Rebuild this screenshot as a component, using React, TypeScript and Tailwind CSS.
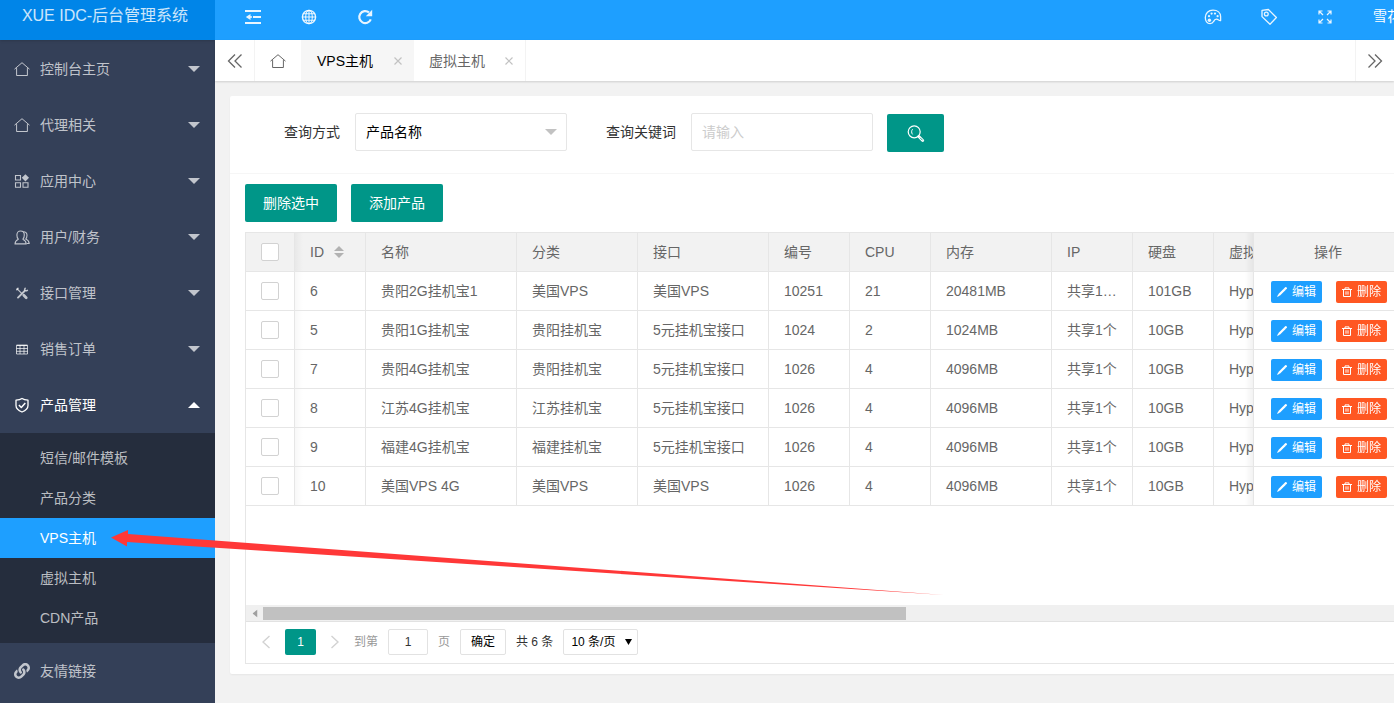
import React from 'react';
import { FaLink } from 'react-icons/fa';

type IconProps = { className?: string };

const Home = ({ className = 'size-4' }: IconProps) => (
  <svg viewBox="0 0 16 16" className={className} fill="none" stroke="currentColor" strokeWidth="1" strokeLinejoin="round" strokeLinecap="round">
    <path d="M.8 7.900 8 1.700l7.200 6.200M2.600 7.500v7h10.800v-7" />
  </svg>
);

const Apps = ({ className = 'size-4' }: IconProps) => (
  <svg viewBox="0 0 16 16" className={className} fill="none" stroke="currentColor" strokeWidth="1.100">
    <path d="M1.500 2.500h5v4.500h-5zM1.500 9.800h5v4.500h-5zM9 9.800h5v4.500H9z" />
    <path d="M11.400 1.200 15 4.800l-3.600 3.600-3.600-3.600z" fill="currentColor" stroke="none" />
  </svg>
);

const Users = ({ className = 'size-4' }: IconProps) => (
  <svg viewBox="0 0 16 16" className={className} fill="none" stroke="currentColor" strokeWidth="1.100" strokeLinejoin="round" strokeLinecap="round">
    <path d="M1 14.900c0-2.700 1.400-3.700 3.300-4.700C3.300 9.100 2.900 7.500 2.900 5.900 2.900 3.500 4.400 2 6.600 2s3.700 1.500 3.700 3.900c0 1.600-.4 3.200-1.400 4.300 1.900 1 3.300 2 3.300 4.700z" />
    <path d="M10 2.700c2 .2 3 1.600 3 3.600 0 1.500-.4 2.800-1.300 3.800 2.100.9 3.300 2 3.500 4.400h-2" />
  </svg>
);

const Tools = ({ className = 'size-4' }: IconProps) => (
  <svg viewBox="0 0 16 16" className={className} fill="none" stroke="currentColor" strokeLinecap="round">
    <path d="m3.200 3.800 4 4" strokeWidth="1.200" />
    <path d="m9.800 10.300 2.400 2.400" strokeWidth="2.800" />
    <path d="M10.600 6 4 12.600" strokeWidth="1.900" />
    <path d="M11.200 3.200c-1.400 1.500.2 3.400 2.200 2.200" strokeWidth="1.500" />
    <path d="m2.800 4.600 1.200-1.200" strokeWidth="1.500" />
  </svg>
);

const Grid = ({ className = 'size-4' }: IconProps) => (
  <svg viewBox="0 0 16 16" className={className} fill="none" stroke="currentColor" strokeWidth="1">
    <path d="M2.500 4.500h11v8.500h-11zM2.500 7.500h11M2.500 10.300h11M6 4v9M10 4v9" />
    <path d="M2.500 4.300h11" strokeWidth="1.500" />
  </svg>
);

const Shield = ({ className = 'size-4' }: IconProps) => (
  <svg viewBox="0 0 16 16" className={className} fill="none" stroke="currentColor" strokeWidth="1.300" strokeLinejoin="round">
    <path d="M8 1.500c1.500 1 3.500 1.500 6 1.600v5.300c0 3.100-2.300 5.100-6 6.600-3.700-1.500-6-3.500-6-6.600V3.100c2.500-.1 4.500-.6 6-1.600z" />
    <path d="m4.900 8 2.400 2.500 4-4.400" strokeWidth="1.500" />
  </svg>
);

const Link = ({ className = 'size-4' }: IconProps) => <FaLink className={className} />;

const Outdent = () => (
  <svg viewBox="0 0 16 16" className="size-4" fill="currentColor">
    <path d="M0 1h16v2H0zM0 13h16v2H0zM8 7h8v2H8zM5.500 5v6L.8 8z" />
    <path d="M5 7.300h2v1.400H5z" />
  </svg>
);

const Globe = () => (
  <svg viewBox="0 0 16 16" className="size-4" fill="none" stroke="currentColor" strokeWidth="1.100">
    <circle cx="8" cy="8" r="6.600" strokeWidth="1.400" />
    <ellipse cx="8" cy="8" rx="3.300" ry="6.600" />
    <path d="M8 1.400v13.200M1.400 8h13.200M2.400 4.700h11.200M2.400 11.300h11.200" />
  </svg>
);

const Refresh = () => (
  <svg viewBox="0 0 16 16" className="size-4" fill="none" stroke="currentColor" strokeWidth="2.200">
    <path d="M13.800 10.400A6 6 0 1 1 12 3.400" />
    <path d="M15.200.8v6.400H8.800z" fill="currentColor" stroke="none" />
  </svg>
);

const Palette = () => (
  <svg viewBox="0 0 18 16" className="h-4 w-[18px]" fill="none" stroke="currentColor" strokeWidth="1.300" strokeLinejoin="round">
    <path d="M9 1.200c4.600 0 7.600 2.700 7.600 6.400v4c-1.600.5-2.200-1.400-4.300-1.400-1.600 0-2.100 1-2.800 2.400-.6 1.400-1.700 2.100-3.400 2.100C3 14.700 1.300 11.900 1.300 8.600c0-4.300 3.200-7.400 7.700-7.400z" />
    <g fill="currentColor" stroke="none">
      <circle cx="5" cy="7.200" r="1.100" />
      <circle cx="7.600" cy="4.600" r="1.100" />
      <circle cx="11" cy="4.600" r="1.100" />
      <circle cx="13.600" cy="7.200" r="1.100" />
      <circle cx="5.400" cy="11.300" r="1.700" />
    </g>
  </svg>
);

const Tag = () => (
  <svg viewBox="0 0 18 18" className="size-[18px]" fill="none" stroke="currentColor" strokeWidth="1.300" strokeLinejoin="round">
    <path d="M2 2.400 8.400 1.500l8 8-6.400 6.700-8-7.600z" />
    <circle cx="6.300" cy="6" r="1.900" />
  </svg>
);

const Expand = () => (
  <svg viewBox="0 0 14 14" className="size-3.5" fill="none" stroke="currentColor" strokeWidth="1.200">
    <path d="M1 4.500V1h3.500M1 1l4 4M9.500 1H13v3.500M13 1 9 5M1 9.500V13h3.500M1 13l4-4M13 9.500V13H9.500M13 13 9 9" />
  </svg>
);

const Chevrons = ({ flip = false }: { flip?: boolean }) => (
  <svg viewBox="0 0 16 16" className={flip ? 'size-4 rotate-180' : 'size-4'} fill="none" stroke="currentColor" strokeWidth="1.300">
    <path d="M8 1.500 1.500 8 8 14.500M14.500 1.500 8 8l6.500 6.500" />
  </svg>
);

const Close = () => (
  <svg viewBox="0 0 8 8" className="size-2" fill="none" stroke="currentColor" strokeWidth="1.200">
    <path d="m.5.5 7 7M7.500.5l-7 7" />
  </svg>
);

const Search = () => (
  <svg viewBox="0 0 18 18" className="size-[18px]" fill="none" stroke="currentColor" strokeWidth="1.200">
    <circle cx="7.200" cy="7.800" r="6" />
    <path d="M5.600 5.200c-1.300 1.400-1.300 3.800 0 5.200" strokeWidth="1" />
    <path d="m11.800 12.600 3.900 3.900" strokeWidth="2.800" strokeLinecap="round" />
    <path d="m13.300 14 2 2" stroke="#009688" strokeWidth=".9" strokeLinecap="round" />
  </svg>
);

const Pencil = () => (
  <svg viewBox="0 0 10 10" className="size-2.5" fill="none" stroke="currentColor">
    <path d="m2 8 5.800-5.800" strokeWidth="2.300" />
    <path d="m8.200 1.800.6-.6" strokeWidth="2.300" strokeLinecap="round" />
    <path d="M1.200 7.200 0 10l2.800-1.200z" fill="currentColor" stroke="none" />
  </svg>
);

const Trash = () => (
  <svg viewBox="0 0 10 10" className="size-2.5" fill="none" stroke="currentColor" strokeWidth="1">
    <path d="M0 2.500h10M3 2.300V.9h4v1.400M1.500 2.500v7h7v-7M4 4.300v3.400M6 4.300v3.400" />
  </svg>
);

const Triangle = ({ className = '' }: IconProps) => (
  <svg viewBox="0 0 12 6" preserveAspectRatio="none" className={className} fill="currentColor">
    <path d="M0 0h12L6 6z" />
  </svg>
);

const Angle = ({ flip = false }: { flip?: boolean }) => (
  <svg viewBox="0 0 8 14" className={flip ? 'h-3.5 w-2 rotate-180' : 'h-3.5 w-2'} fill="none" stroke="currentColor" strokeWidth="1.400">
    <path d="M7.500 1 1 7l6.500 6" />
  </svg>
);

const menu = [
  { label: '控制台主页', Icon: Home },
  { label: '代理相关', Icon: Home },
  { label: '应用中心', Icon: Apps },
  { label: '用户/财务', Icon: Users },
  { label: '接口管理', Icon: Tools },
  { label: '销售订单', Icon: Grid },
  { label: '产品管理', Icon: Shield, children: ['短信/邮件模板', '产品分类', 'VPS主机', '虚拟主机', 'CDN产品'] },
  { label: '友情链接', Icon: Link, leaf: true },
];

const columns = [
  { label: 'ID', width: 'w-[71px]' },
  { label: '名称', width: 'w-[151px]' },
  { label: '分类', width: 'w-[121px]' },
  { label: '接口', width: 'w-[131px]' },
  { label: '编号', width: 'w-[81px]' },
  { label: 'CPU', width: 'w-[81px]' },
  { label: '内存', width: 'w-[121px]' },
  { label: 'IP', width: 'w-[81px]' },
  { label: '硬盘', width: 'w-[81px]' },
  { label: '虚拟化', width: 'w-[121px]' },
];

const rows = [
  ['6', '贵阳2G挂机宝1', '美国VPS', '美国VPS', '10251', '21', '20481MB', '共享1…', '101GB', 'Hyper-V'],
  ['5', '贵阳1G挂机宝', '贵阳挂机宝', '5元挂机宝接口', '1024', '2', '1024MB', '共享1个', '10GB', 'Hyper-V'],
  ['7', '贵阳4G挂机宝', '贵阳挂机宝', '5元挂机宝接口', '1026', '4', '4096MB', '共享1个', '10GB', 'Hyper-V'],
  ['8', '江苏4G挂机宝', '江苏挂机宝', '5元挂机宝接口', '1026', '4', '4096MB', '共享1个', '10GB', 'Hyper-V'],
  ['9', '福建4G挂机宝', '福建挂机宝', '5元挂机宝接口', '1026', '4', '4096MB', '共享1个', '10GB', 'Hyper-V'],
  ['10', '美国VPS 4G', '美国VPS', '美国VPS', '1026', '4', '4096MB', '共享1个', '10GB', 'Hyper-V'],
];

function Sidebar() {
  return (
    <aside className="w-[215px] shrink-0 bg-[#344058] text-white/70">
      <h1 className="mb-px h-10 bg-[#0085e8] pr-[5px] text-center text-base leading-8 text-white/80 shadow-sm">XUE IDC-后台管理系统</h1>
      <nav>
        {menu.map(({ label, Icon, children, leaf }) => (
          <div key={label}>
            <a href="#" className={children ? 'flex h-14 items-center pr-[15px] pl-3.5 text-white' : 'flex h-14 items-center pr-[15px] pl-3.5'}>
              <Icon className="mr-[10px] size-4" />
              <span className="flex-1">{label}</span>
              {!leaf && <Triangle className={children ? 'h-1.5 w-3 rotate-180' : 'h-1.5 w-3'} />}
            </a>
            {children && (
              <ul className="bg-[#252d3d] py-[5px]">
                {children.map((c) => (
                  <li key={c}>
                    <a href="#" className={c === 'VPS主机' ? 'block bg-[#1e9fff] pl-10 leading-10 text-white' : 'block pl-10 leading-10'}>{c}</a>
                  </li>
                ))}
              </ul>
            )}
          </div>
        ))}
      </nav>
    </aside>
  );
}

function TopBar() {
  return (
    <header className="flex h-10 items-start overflow-hidden bg-[#1e9fff] pl-2.5 text-white/90">
      <button aria-label="收起菜单" className="flex h-[34px] w-14 items-center justify-center"><Outdent /></button>
      <button aria-label="网站首页" className="flex h-[34px] w-14 items-center justify-center"><Globe /></button>
      <button aria-label="刷新" className="flex h-[34px] w-14 items-center justify-center"><Refresh /></button>
      <div className="flex-1" />
      <button aria-label="主题" className="flex h-[34px] w-14 items-center justify-center"><Palette /></button>
      <button aria-label="便签" className="flex h-[34px] w-14 items-center justify-center"><Tag /></button>
      <button aria-label="全屏" className="flex h-[34px] w-14 items-center justify-center"><Expand /></button>
      <a href="#" className="w-[41px] overflow-hidden pl-5 leading-8 whitespace-nowrap text-white">雪花</a>
    </header>
  );
}

function TabBar() {
  return (
    <div className="relative flex h-[41px] items-stretch bg-white text-[#666] shadow-[0_1px_2px_rgba(0,0,0,0.15)]">
      <button aria-label="向左" className="flex w-10 items-center justify-center border-r border-[#f3f3f3]"><Chevrons /></button>
      <a href="#" aria-label="主页" className="flex w-[46px] items-center justify-center"><Home className="size-4" /></a>
      <div className="flex w-[113px] items-center justify-between bg-[#f6f6f6] pr-3 pl-4 text-black">
        <a href="#">VPS主机</a>
        <button aria-label="关闭 VPS主机" className="text-[#c2c2c2]"><Close /></button>
      </div>
      <div className="flex w-28 items-center justify-between border-r border-[#f3f3f3] pr-3 pl-[15px]">
        <a href="#">虚拟主机</a>
        <button aria-label="关闭 虚拟主机" className="text-[#c2c2c2]"><Close /></button>
      </div>
      <div className="flex-1" />
      <button aria-label="向右" className="flex w-[39px] items-center justify-center border-l border-[#f3f3f3]"><Chevrons flip /></button>
    </div>
  );
}

const box = 'block size-[18px] appearance-none rounded-xs border border-[#d2d2d2] bg-white checked:bg-[#009688]';

function ProductTable() {
  return (
    <div className="min-h-[372px] overflow-hidden">
      <table className="w-[1230px] table-fixed border-separate border-spacing-0 text-left">
        <thead>
          <tr className="h-[39px] bg-[#f2f2f2]">
            <th className="w-[49px] border-r border-b border-[#e6e6e6] pl-[15px]">
              <input type="checkbox" aria-label="全选" className={box} />
            </th>
            {columns.map((c, i) => (
              <th
                key={c.label}
                className={`${c.width} border-r border-b border-[#e6e6e6] px-[15px] font-normal whitespace-nowrap ${i === 0 ? 'bg-[linear-gradient(to_right,rgba(0,0,0,0.04),transparent_8px)]' : ''}`}
              >
                {i === 0 ? (
                  <button className="flex items-center gap-2.5">
                    ID
                    <span className="flex flex-col gap-0.5 text-[#b2b2b2]">
                      <Triangle className="h-[5px] w-2.5 rotate-180" />
                      <Triangle className="h-[5px] w-2.5" />
                    </span>
                  </button>
                ) : (
                  c.label
                )}
              </th>
            ))}
            <th className="sticky right-0 w-[141px] border-b border-l border-[#e6e6e6] bg-[#f2f2f2] pl-[60px] font-normal before:absolute before:inset-y-0 before:right-full before:mr-px before:w-2 before:bg-linear-to-l before:from-black/5 before:to-transparent">
              操作
            </th>
          </tr>
        </thead>
        <tbody>
          {rows.map((r) => (
            <tr key={r[0]} className="h-[39px]">
              <td className="border-r border-b border-[#e6e6e6] pl-[15px]">
                <input type="checkbox" aria-label={`选择 ${r[1]}`} className={box} />
              </td>
              {r.map((v, i) => (
                <td
                  key={i}
                  className={`border-r border-b border-[#e6e6e6] pl-[15px] whitespace-nowrap ${i === 0 ? 'bg-[linear-gradient(to_right,rgba(0,0,0,0.03),transparent_8px)]' : ''}`}
                >
                  {v}
                </td>
              ))}
              <td className="sticky right-0 border-b border-l border-[#e6e6e6] bg-white pt-0.5 pl-[17px] before:absolute before:inset-y-0 before:right-full before:mr-px before:w-2 before:bg-linear-to-l before:from-black/5 before:to-transparent">
                <div className="flex gap-3.5 text-xs text-white">
                  <button className="flex h-[22px] w-[51px] items-center justify-center gap-[5px] rounded-xs bg-[#1e9fff]"><Pencil />编辑</button>
                  <button className="flex h-[22px] w-[51px] items-center justify-center gap-[5px] rounded-xs bg-[#ff5722]"><Trash />删除</button>
                </div>
              </td>
            </tr>
          ))}
        </tbody>
      </table>
    </div>
  );
}

function Pager() {
  return (
    <div className="flex h-[41px] items-center pb-px pl-4 text-xs text-[#333]">
      <button aria-label="上一页" className="text-[#d2d2d2]"><Angle /></button>
      <button className="ml-[15px] h-[26px] w-[31px] rounded-xs bg-[#009688] text-white">1</button>
      <button aria-label="下一页" className="ml-[15px] text-[#d2d2d2]"><Angle flip /></button>
      <label htmlFor="page" className="ml-[15px] text-[#999]">到第</label>
      <input id="page" defaultValue="1" className="ml-2.5 h-[26px] w-10 rounded-xs border border-[#e2e2e2] text-center" />
      <span className="ml-2.5 text-[#999]">页</span>
      <button className="ml-2.5 h-[26px] w-[46px] rounded-xs border border-[#e2e2e2] text-black">确定</button>
      <span className="ml-2.5 whitespace-nowrap">共 6 条</span>
      <div className="relative ml-2.5">
        <select aria-label="每页条数" className="h-[26px] w-[75px] appearance-none rounded-xs border border-[#e2e2e2] bg-white pl-[7px] text-black">
          <option>10 条/页</option>
        </select>
        <Triangle className="pointer-events-none absolute top-2.5 right-1.5 h-1.5 w-[7px] text-black" />
      </div>
    </div>
  );
}

export default function App() {
  return (
    <div className="relative flex min-h-screen overflow-hidden bg-[#f2f2f2] font-['Liberation_Sans','Noto_Sans_CJK_SC',sans-serif] text-sm leading-5">
      <Sidebar />
      <div className="flex min-w-0 flex-1 flex-col">
        <TopBar />
        <TabBar />
        <main className="mt-[15px] ml-[15px] rounded-l-xs bg-white text-[#666] shadow-[0_1px_2px_rgba(0,0,0,0.05)]">
          <form className="flex h-[78px] items-start border-b border-[#f6f6f6] pt-[17px] pl-[54px] text-[#333]">
            <label htmlFor="mode" className="mr-[15px] leading-[38px]">查询方式</label>
            <div className="relative mr-[39px]">
              <select id="mode" className="h-[38px] w-[212px] appearance-none rounded-xs border border-[#e6e6e6] bg-white pl-2.5 text-black">
                <option>产品名称</option>
              </select>
              <Triangle className="pointer-events-none absolute top-4 right-2.5 h-1.5 w-3 text-[#c2c2c2]" />
            </div>
            <label htmlFor="keyword" className="mr-[15px] leading-[38px]">查询关键词</label>
            <input id="keyword" placeholder="请输入" className="mr-3.5 h-[38px] w-[182px] rounded-xs border border-[#e6e6e6] pl-2.5 placeholder:text-[#ccc]" />
            <button type="button" aria-label="查询" className="mt-px flex h-[38px] w-[57px] items-center justify-center rounded-xs bg-[#009688] text-white"><Search /></button>
          </form>
          <div className="py-2.5 pl-[15px]">
            <div className="mb-2.5 flex gap-3.5 text-white">
              <button className="h-[38px] w-[92px] rounded-xs bg-[#009688]">删除选中</button>
              <button className="h-[38px] w-[92px] rounded-xs bg-[#009688]">添加产品</button>
            </div>
            <div className="border-y border-l border-[#e6e6e6]">
              <ProductTable />
              <div className="flex h-[17px] items-center border-b border-[#e2e2e2] bg-[#f0f0f0]">
                <span className="flex w-[17px] justify-center text-[#a0a0a0]"><Triangle className="h-[5px] w-2 rotate-90" /></span>
                <div className="h-[13px] w-[643px] bg-[#c1c1c1]" />
              </div>
              <Pager />
            </div>
          </div>
        </main>
      </div>
      <svg viewBox="0 0 836 70" className="pointer-events-none absolute top-[528px] left-[110px] h-[70px] w-[836px]" fill="#ff3838">
        <path d="M1 9.500 18 2v4l816 61L17 14v4.500z" />
      </svg>
    </div>
  );
}
